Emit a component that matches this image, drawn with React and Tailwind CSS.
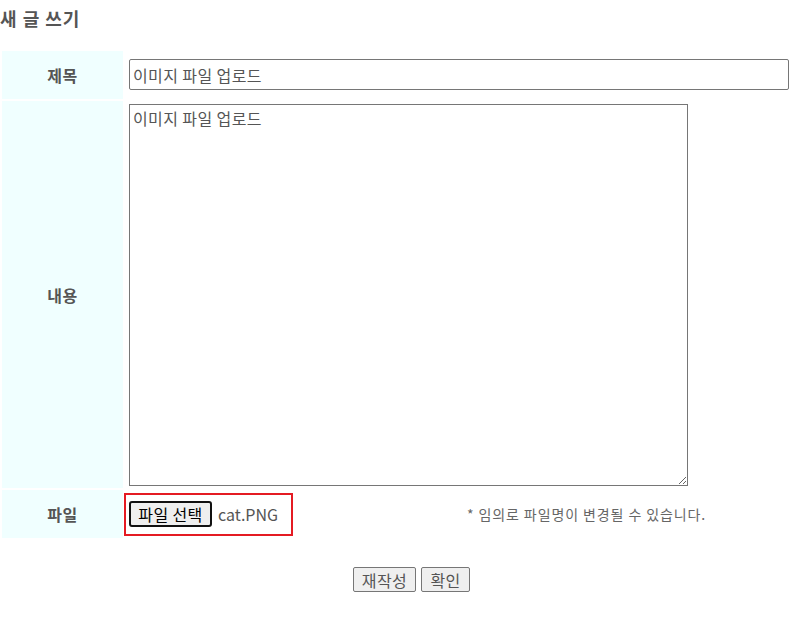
import React from "react";

const font = { fontFamily: '"Noto Sans CJK KR", "Noto Sans", sans-serif' };

export default function App() {
  return (
    <div className="w-[794px] h-[618px] bg-white text-[#555]" style={font}>
      <h2 className="h-[49px] pt-[6px] text-[18px] leading-[24px] font-bold tracking-[1px] text-[#555]">
        새 글 쓰기
      </h2>

      <div className="grid grid-cols-[121px_1fr] grid-rows-[48px_387px_48px] gap-[2px] p-[2px]">
        {/* 제목 */}
        <div className="bg-[#f0ffff] flex items-center justify-center text-[16px] font-bold tracking-[0.5px]">제목</div>
        <div className="pl-[4px] pr-[3px] pt-[8px]">
          <input
            defaultValue="이미지 파일 업로드"
            className="w-full h-[31px] border border-[#767676] rounded-[2px] px-[3px] text-[16px] tracking-[0.4px] text-[#555] outline-none"
            style={font}
          />
        </div>

        {/* 내용 */}
        <div className="bg-[#f0ffff] flex items-center justify-center text-[16px] font-bold tracking-[0.5px]">내용</div>
        <div className="pl-[4px] pt-[3px]">
          <textarea
            defaultValue="이미지 파일 업로드"
            className="w-[559px] h-[382px] border border-[#767676] px-[3px] py-[3px] text-[16px] leading-[20px] tracking-[0.4px] text-[#555] outline-none"
            style={font}
          />
        </div>

        {/* 파일 */}
        <div className="bg-[#f0ffff] flex items-center justify-center text-[16px] font-bold tracking-[0.5px]">파일</div>
        <div className="flex items-start pt-[3px]">
          <div className="-ml-[1px] w-[169px] h-[43px] border-2 border-[#e41b23] flex items-start pt-[6px] pl-[3px]">
            <button
              className="h-[26px] w-[83px] border-2 border-[#111] rounded-[3px] bg-[#efefef] text-[16px] leading-[20px] tracking-[0.4px] text-black"
              style={font}
            >
              파일 선택
            </button>
            <span className="ml-[6px] text-[16px] leading-[26px] text-[#555]">cat.PNG</span>
          </div>
          <span className="ml-[174px] mt-[12px] text-[14px] leading-[18px] tracking-[0.9px] text-[#666]">
            * 임의로 파일명이 변경될 수 있습니다.
          </span>
        </div>
      </div>

      <div className="flex gap-[5px] mt-[27px] pl-[353px]">
        <button
          className="h-[25px] w-[63px] border border-[#767676] rounded-[2px] bg-[#efefef] text-[16px] leading-[20px] tracking-[0.4px] text-[#555]"
          style={font}
        >
          재작성
        </button>
        <button
          className="h-[25px] w-[49px] border border-[#767676] rounded-[2px] bg-[#efefef] text-[16px] leading-[20px] tracking-[0.4px] text-[#555]"
          style={font}
        >
          확인
        </button>
      </div>
    </div>
  );
}
